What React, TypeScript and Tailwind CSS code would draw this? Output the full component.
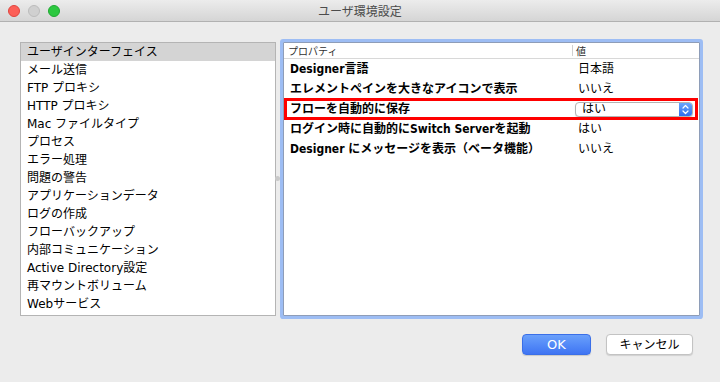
import React from "react";

const listItems = [
  "ユーザインターフェイス",
  "メール送信",
  "FTP プロキシ",
  "HTTP プロキシ",
  "Mac ファイルタイプ",
  "プロセス",
  "エラー処理",
  "問題の警告",
  "アプリケーションデータ",
  "ログの作成",
  "フローバックアップ",
  "内部コミュニケーション",
  "Active Directory設定",
  "再マウントボリューム",
  "Webサービス",
];

const rows = [
  { label: "Designer言語", value: "日本語" },
  { label: "エレメントペインを大きなアイコンで表示", value: "いいえ" },
  { label: "フローを自動的に保存", value: "はい", select: true },
  { label: "ログイン時に自動的にSwitch Serverを起動", value: "はい" },
  { label: "Designer にメッセージを表示（ベータ機能）", value: "いいえ" },
];

function TrafficLights() {
  return (
    <div className="flex items-center gap-[8px] pl-[8px]">
      <span className="w-[12px] h-[12px] rounded-full bg-[#fc5f57] border border-[#e0443e]" />
      <span className="w-[12px] h-[12px] rounded-full bg-[#d0d0d0] border border-[#bcbcbc]" />
      <span className="w-[12px] h-[12px] rounded-full bg-[#2cc840] border border-[#1fa832]" />
    </div>
  );
}

function PopupSelect({ value }: { value: string }) {
  return (
    <div className="ml-[2px] w-[118px] h-[15px] flex items-stretch rounded-[4px] border border-[#b3b3b3] bg-white shadow-[0_1px_1px_rgba(0,0,0,0.12)] overflow-hidden">
      <span className="flex-1 flex items-center pl-[6px] text-[12px] leading-none text-black">{value}</span>
      <span className="w-[13px] flex items-center justify-center bg-gradient-to-b from-[#6aa4fa] to-[#2e6ef0]">
        <svg width="7" height="11" viewBox="0 0 7 11" fill="none">
          <path d="M1 4 L3.5 1.5 L6 4" stroke="white" strokeWidth="1.2" strokeLinecap="round" strokeLinejoin="round" />
          <path d="M1 7 L3.5 9.5 L6 7" stroke="white" strokeWidth="1.2" strokeLinecap="round" strokeLinejoin="round" />
        </svg>
      </span>
    </div>
  );
}

export default function App() {
  return (
    <div className="w-[720px] h-[382px] bg-[#ececec] flex flex-col overflow-hidden font-['DejaVu_Sans','Noto_Sans_CJK_JP',sans-serif] text-black">
      {/* Title bar */}
      <header className="relative h-[22px] shrink-0 flex items-center bg-gradient-to-b from-[#ececec] to-[#d5d5d5] border-b border-[#b1b1b1]">
        <TrafficLights />
        <span className="absolute inset-0 flex items-center justify-center text-[12px] text-[#4b4b4b] font-['Noto_Sans_CJK_JP',sans-serif]">
          ユーザ環境設定
        </span>
      </header>

      {/* Main area */}
      <div className="flex h-[274px] mt-[20px] pl-[20px] pr-[20px]">
        {/* Category list */}
        <div className="w-[256px] h-full bg-white border border-[#b4b4b4] flex flex-col">
          {listItems.map((item, i) => (
            <div
              key={item}
              className={`h-[18px] flex items-center pl-[6px] text-[12px] leading-none whitespace-nowrap ${
                i === 0 ? "bg-[#d4d4d4]" : ""
              }`}
            >
              {item}
            </div>
          ))}
        </div>

        {/* Splitter */}
        <div className="w-[7px] flex items-center">
          <span className="w-[5px] h-[5px] -ml-[1px] mt-[-1px] rounded-full bg-[#c9c9c9]" />
        </div>

        {/* Properties table */}
        <div className="relative flex-1 h-full bg-white border border-[#8e9db8] rounded-[1px] shadow-[0_0_0_3px_#9dbdf4]">
          <div className="h-[16px] flex border-b border-[#d8d8d8] text-[10px] text-[#2f2f2f] font-['Noto_Sans_CJK_JP',sans-serif]">
            <div className="w-[288px] flex items-center pl-[4px]">プロパティ</div>
            <div className="w-px my-[2px] bg-[#d0d0d0]" />
            <div className="flex-1 flex items-center pl-[3px]">値</div>
          </div>

          {rows.map((row) => (
            <div key={row.label} className="h-[20px] flex items-center">
              <div className="w-[289px] pl-[6px] text-[12px] font-bold leading-none whitespace-nowrap font-['DejaVu_Sans_Condensed','DejaVu_Sans','Noto_Sans_CJK_JP',sans-serif] [font-stretch:condensed]">
                {row.label}
              </div>
              <div className="flex-1 flex items-center">
                {row.select ? (
                  <PopupSelect value={row.value} />
                ) : (
                  <span className="pl-[5px] text-[12px] leading-none">{row.value}</span>
                )}
              </div>
            </div>
          ))}

          {/* highlight annotation */}
          <div className="absolute left-[0px] top-[55px] w-[414px] h-[22px] border-[3px] border-[#ff0000] pointer-events-none" />
        </div>
      </div>

      {/* Buttons */}
      <div className="flex justify-end gap-[15px] mt-[18px] pr-[27px]">
        <button className="w-[69px] h-[21px] rounded-[4px] bg-gradient-to-b from-[#6aa0fb] to-[#3f74f3] border border-[#3a6fe8] text-white text-[13px] leading-none flex items-center justify-center shadow-[0_1px_1px_rgba(0,0,0,0.15)]">
          OK
        </button>
        <button className="w-[87px] h-[21px] rounded-[4px] bg-white border border-[#c3c3c3] text-[12px] leading-none flex items-center justify-center shadow-[0_1px_1px_rgba(0,0,0,0.12)]">
          キャンセル
        </button>
      </div>
    </div>
  );
}
